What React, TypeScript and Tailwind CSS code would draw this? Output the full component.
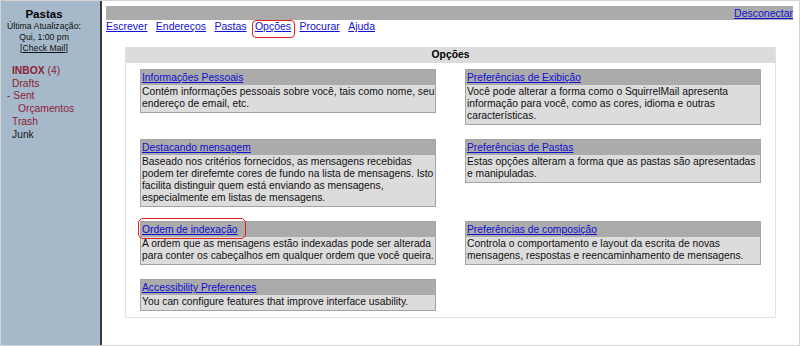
const folders = [
  { name: "INBOX", count: "(4)", bold: true, indent: "pl-[11px]", prefix: "" },
  { name: "Drafts", indent: "pl-[11px]", prefix: "" },
  { name: "Sent", indent: "pl-[6px]", prefix: "- " },
  { name: "Orçamentos", indent: "pl-[17px]", prefix: "" },
  { name: "Trash", indent: "pl-[11px]", prefix: "" },
  { name: "Junk", indent: "pl-[11px]", prefix: "", plain: true },
];

const navLinks = ["Escrever", "Endereços", "Pastas", "Opções", "Procurar", "Ajuda"];

type Opt = { title: string; lines: string[] };

const left: Opt[] = [
  {
    title: "Informações Pessoais",
    lines: ["Contém informações pessoais sobre você, tais como nome, seu", "endereço de email, etc."],
  },
  {
    title: "Destacando mensagem",
    lines: [
      "Baseado nos critérios fornecidos, as mensagens recebidas",
      "podem ter direfemte cores de fundo na lista de mensagens. Isto",
      "facilita distinguir quem está enviando as mensagens,",
      "especialmente em listas de mensagens.",
    ],
  },
  {
    title: "Ordem de indexação",
    lines: ["A ordem que as mensagens estão indexadas pode ser alterada", "para conter os cabeçalhos em qualquer ordem que você queira."],
  },
  {
    title: "Accessibility Preferences",
    lines: ["You can configure features that improve interface usability."],
  },
];

const right: Opt[] = [
  {
    title: "Preferências de Exibição",
    lines: [
      "Você pode alterar a forma como o SquirrelMail apresenta",
      "informação para você, como as cores, idioma e outras",
      "características.",
    ],
  },
  {
    title: "Preferências de Pastas",
    lines: ["Estas opções alteram a forma que as pastas são apresentadas", "e manipuladas."],
  },
  {
    title: "Preferências de composição",
    lines: ["Controla o comportamento e layout da escrita de novas", "mensagens, respostas e reencaminhamento de mensagens."],
  },
];

const OptionCard = ({ opt }: { opt: Opt }) => (
  <div className="border border-[#a4a4a4]">
    <div className="h-[15px] bg-[#ababab] pl-[1px] leading-[15px]">
      <a href="#" className="text-[#1010d0] underline">
        {opt.title}
      </a>
    </div>
    <div className="bg-[#dcdcdc] pl-[1px] pt-[1px] pb-[2px] leading-[12px] whitespace-nowrap text-[#111]">
      {opt.lines.map((l, i) => (
        <div key={i}>{l}</div>
      ))}
    </div>
  </div>
);

export default function App() {
  const rows = [0, 1, 2, 3];
  return (
    <div className="relative w-[800px] h-[346px] flex border border-[#d4d4d4] bg-white overflow-hidden font-['Liberation_Sans',Arial,sans-serif] text-[10.3px]">
      {/* folder list */}
      <aside className="w-[101px] shrink-0 bg-[#a5b9ca] border-r-2 border-[#3a3a3a] pt-[6px] text-black">
        <div className="w-[86px] text-center">
          <div className="text-[11.5px] font-bold leading-[14px]">Pastas</div>
          <div className="text-[8.7px] leading-[11px] text-[#111]">
            <div>Última Atualização:</div>
            <div>Qui, 1:00 pm</div>
            <div>
              [<span className="underline">Check Mail</span>]
            </div>
          </div>
        </div>
        <div className="mt-[11px] leading-[12.7px] text-[#8e2235]">
          {folders.map((f) => (
            <div key={f.name} className={f.indent}>
              {f.prefix}
              {f.bold ? (
                <>
                  <span className="font-bold">{f.name}</span> {f.count}
                </>
              ) : (
                <span className={f.plain ? "text-[#1a1a1a]" : ""}>{f.name}</span>
              )}
            </div>
          ))}
        </div>
      </aside>

      {/* right pane */}
      <main className="flex-1 pl-[4px] pr-[6px] pt-[5px]">
        <div className="h-[14px] bg-[#ababab] text-right leading-[14px]">
          <a href="#" className="text-[#1010d0] underline text-[10.5px]">
            Desconectar
          </a>
        </div>
        <div className="flex gap-[8.4px] leading-[13px] text-[10.5px]">
          {navLinks.map((n) => (
            <a key={n} href="#" className="text-[#1010d0] underline">
              {n}
            </a>
          ))}
        </div>

        <div className="ml-[19px] mt-[14px] w-[651px] border border-[#e2e2e2]">
          <div className="h-[16px] bg-[#dcdcdc] text-center font-bold leading-[16px] -mt-px">Opções</div>
          <div className="grid grid-cols-[296px_296px] gap-x-[29px] gap-y-[14px] items-start px-[14px] pt-[6px] pb-[6px]">
            {rows.map((r) => (
              <div key={r} className="contents">
                <OptionCard opt={left[r]} />
                {right[r] ? <OptionCard opt={right[r]} /> : <div />}
              </div>
            ))}
          </div>
        </div>
      </main>

      {/* annotation marks */}
      <div className="absolute left-[251px] top-[19px] w-[43px] h-[18px] border-[1.5px] border-[#e5201c] rounded-[4px]" />
      <div className="absolute left-[137px] top-[217px] w-[108px] h-[21px] border-[1.5px] border-[#e5201c] rounded-[5px]" />
    </div>
  );
}
